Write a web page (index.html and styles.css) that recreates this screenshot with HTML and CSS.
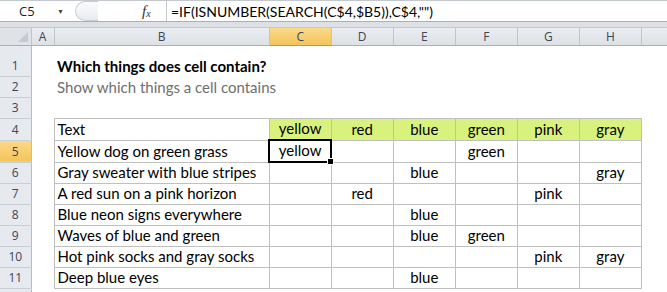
FILE: index.html
```html
<!DOCTYPE html>
<html lang="en">
<head>
    <meta charset="UTF-8">
    <title>Which things does cell contain?</title>
    <link rel="stylesheet" href="styles.css">
</head>
<body>
    <div class="formula-bar">
        <div class="name-box">
            <span class="cell-ref">C5</span>
            <span class="drop">&#9660;</span>
        </div>
        <div class="grip"></div>
        <div class="fx"><i>f</i><i class="x">x</i></div>
        <div class="formula">=IF(ISNUMBER(SEARCH(C$4,$B5)),C$4,"")</div>
    </div>
    <div class="band"></div>

    <table class="sheet">
        <colgroup>
            <col class="w-rh">
            <col class="w-a">
            <col class="w-b">
            <col class="w-c"><col class="w-c"><col class="w-c">
            <col class="w-c"><col class="w-c"><col class="w-c">
            <col class="w-i">
        </colgroup>
        <thead>
            <tr>
                <th class="corner"><span class="tri"></span></th>
                <th>A</th><th>B</th><th class="active">C</th><th>D</th>
                <th>E</th><th>F</th><th>G</th><th>H</th><th class="last"></th>
            </tr>
        </thead>
        <tbody>
            <tr class="tall">
                <th>1</th><td></td><td class="title">Which things does cell contain?</td>
                <td></td><td></td><td></td><td></td><td></td><td></td><td></td>
            </tr>
            <tr>
                <th>2</th><td></td><td class="subtitle">Show which things a cell contains</td>
                <td></td><td></td><td></td><td></td><td></td><td></td><td></td>
            </tr>
            <tr>
                <th>3</th><td></td><td></td>
                <td></td><td></td><td></td><td></td><td></td><td></td><td></td>
            </tr>
            <tr>
                <th>4</th><td></td><td class="g">Text</td>
                <td class="g hd">yellow</td><td class="g hd">red</td><td class="g hd">blue</td>
                <td class="g hd">green</td><td class="g hd">pink</td><td class="g hd">gray</td><td></td>
            </tr>
            <tr>
                <th class="active">5</th><td></td><td class="g">Yellow dog on green grass</td>
                <td class="g c sel">yellow<span class="handle"></span></td><td class="g c"></td><td class="g c"></td>
                <td class="g c">green</td><td class="g c"></td><td class="g c"></td><td></td>
            </tr>
            <tr>
                <th>6</th><td></td><td class="g">Gray sweater with blue stripes</td>
                <td class="g c"></td><td class="g c"></td><td class="g c">blue</td>
                <td class="g c"></td><td class="g c"></td><td class="g c">gray</td><td></td>
            </tr>
            <tr>
                <th>7</th><td></td><td class="g">A red sun on a pink horizon</td>
                <td class="g c"></td><td class="g c">red</td><td class="g c"></td>
                <td class="g c"></td><td class="g c">pink</td><td class="g c"></td><td></td>
            </tr>
            <tr>
                <th>8</th><td></td><td class="g">Blue neon signs everywhere</td>
                <td class="g c"></td><td class="g c"></td><td class="g c">blue</td>
                <td class="g c"></td><td class="g c"></td><td class="g c"></td><td></td>
            </tr>
            <tr>
                <th>9</th><td></td><td class="g">Waves of blue and green</td>
                <td class="g c"></td><td class="g c"></td><td class="g c">blue</td>
                <td class="g c">green</td><td class="g c"></td><td class="g c"></td><td></td>
            </tr>
            <tr>
                <th>10</th><td></td><td class="g">Hot pink socks and gray socks</td>
                <td class="g c"></td><td class="g c"></td><td class="g c"></td>
                <td class="g c"></td><td class="g c">pink</td><td class="g c">gray</td><td></td>
            </tr>
            <tr>
                <th>11</th><td></td><td class="g">Deep blue eyes</td>
                <td class="g c"></td><td class="g c"></td><td class="g c">blue</td>
                <td class="g c"></td><td class="g c"></td><td class="g c"></td><td></td>
            </tr>
            <tr>
                <th></th><td></td><td></td>
                <td></td><td></td><td></td><td></td><td></td><td></td><td></td>
            </tr>
        </tbody>
    </table>
</body>
</html>
```

FILE: styles.css
```css
body, html {
    margin: 0;
    padding: 0;
    width: 667px;
    height: 292px;
    overflow: hidden;
    background-color: #fff;
    font-family: Lato, "Open Sans", sans-serif;
    color: #000;
}

/* formula bar */
.formula-bar {
    display: flex;
    align-items: center;
    height: 20px;
    border-top: 1px solid #c3c8ce;
    border-bottom: 1px solid #a9b0b8;
    background-color: #fff;
}

.name-box {
    display: flex;
    align-items: center;
    width: 72px;
    height: 100%;
    font-family: "Open Sans", sans-serif;
    font-size: 13px;
    color: #1e1e1e;
}

.cell-ref {
    padding-left: 19px;
    width: 38px;
}

.drop {
    font-size: 7px;
    color: #444;
}

.grip {
    width: 22px;
    height: 18px;
    margin-left: 3px;
    border: 1px solid #c9ced4;
    border-right: none;
    border-radius: 10px 0 0 10px;
    background: linear-gradient(#fbfbfc, #e9ecef);
}

.fx {
    margin-left: 44px;
    width: 24px;
    height: 100%;
    display: flex;
    align-items: center;
    font-family: "Liberation Serif", serif;
    font-size: 15px;
    color: #333;
    border-right: 1px solid #c3c8ce;
}

.fx .x {
    font-size: 10px;
    margin-top: 4px;
}

.formula {
    padding-left: 4px;
    font-size: 14px;
    white-space: nowrap;
}

.band {
    height: 5px;
    background-color: #dde1e6;
    border-bottom: 1px solid #c4c9cf;
}

/* sheet */
.sheet {
    table-layout: fixed;
    border-collapse: collapse;
    width: 690px;
}

.w-rh { width: 31px; }
.w-a { width: 23px; }
.w-b { width: 215px; }
.w-c { width: 62px; }
.w-i { width: 48px; }

.sheet thead th {
    height: 17px;
    padding: 0;
    font-family: "Open Sans", sans-serif;
    font-weight: normal;
    font-size: 12px;
    color: #3b4656;
    background: linear-gradient(#eaedf1, #dde1e6);
    border-right: 1px solid #bfc5cc;
    border-bottom: 1px solid #a8b0ba;
}

.sheet thead th.active {
    background: linear-gradient(#fbd98a, #f3c459);
    border-bottom-color: #c9973a;
}

.sheet thead th.corner {
    position: relative;
    background: #dfe3e8;
}

.tri {
    position: absolute;
    right: 3px;
    bottom: 3px;
    width: 0;
    height: 0;
    border-left: 10px solid transparent;
    border-bottom: 10px solid #c5cad1;
}

.sheet tbody th {
    height: 19px;
    padding: 0 0 1px;
    font-family: "Open Sans", sans-serif;
    font-weight: normal;
    font-size: 12px;
    line-height: 18px;
    color: #3b4656;
    background-color: #e6e9ed;
    border-right: 1px solid #b6bdc6;
    border-bottom: 1px solid #c9ced5;
    vertical-align: bottom;
    text-align: center;
}

.sheet tbody th.active {
    background: linear-gradient(#fbd98a, #f3c459);
}

.sheet tbody tr.tall th,
.sheet tbody tr.tall td {
    height: 29px;
}

.sheet td {
    height: 19px;
    padding: 0 3px 1px;
    font-size: 15px;
    white-space: nowrap;
    overflow: visible;
    vertical-align: bottom;
    line-height: 19px;
}

.title {
    font-weight: bold;
    font-size: 15.9px;
}

.subtitle {
    color: #6f6f6f;
}

td.g {
    border: 1px solid #c0c0c0;
}

td.hd {
    background-color: #d9f27d;
    text-align: center;
}

td.c {
    text-align: center;
}

td.sel {
    position: relative;
    border: 2px solid #000;
}

.handle {
    position: absolute;
    right: -4px;
    bottom: -4px;
    width: 5px;
    height: 5px;
    background-color: #000;
    border: 1px solid #fff;
}
```
